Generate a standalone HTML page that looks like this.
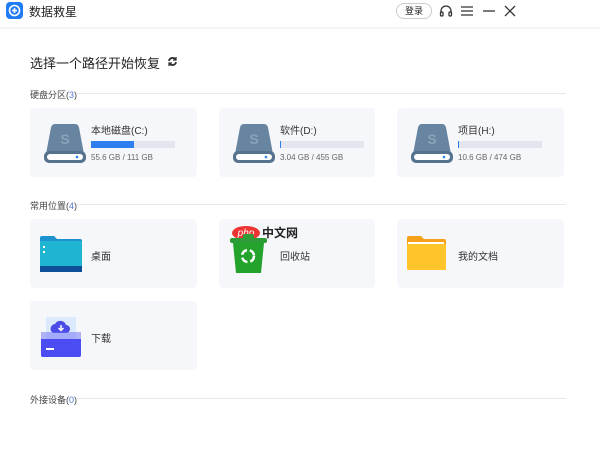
<!DOCTYPE html>
<html><head><meta charset="utf-8"><style>
*{margin:0;padding:0;box-sizing:border-box}
body{width:600px;height:454px;background:#fff;font-family:"Liberation Sans","Noto Sans CJK SC",sans-serif;position:relative;overflow:hidden;color:#333}
.a{position:absolute}
.hdr{left:0;top:0;width:600px;height:29px;border-bottom:2px solid #f3f4f6}
.card{position:absolute;background:#f6f7fa;border-radius:4px;width:167px;height:69px}
.sec{position:absolute;left:30px;font-size:9px;color:#444}
.sec b{font-weight:normal;color:#5577cc}
.line{position:absolute;height:1px;background:#e8e9ec}
.nm{position:absolute;font-size:10px;color:#333}
.bar{position:absolute;height:7px;width:84px;background:#e3e6ee}
.bar i{display:block;height:7px;background:#2d7ff0}
.sz{position:absolute;font-size:8px;color:#666}
</style></head><body>
<div class="a hdr"></div>
<svg class="a" style="left:6px;top:2px" width="17" height="17"><rect width="17" height="17" rx="4" fill="#1f7cf5"/><circle cx="8.5" cy="8.5" r="5" fill="none" stroke="#fff" stroke-width="1.6"/><path d="M8.5 6v5M6 8.5h5" stroke="#fff" stroke-width="1.6"/></svg>
<div class="a" style="left:29px;top:3px;font-size:12px;color:#222">数据救星</div>
<div class="a" style="left:396px;top:3px;width:36px;height:16px;border:1px solid #ccc;border-radius:8px;font-size:9px;text-align:center;line-height:14px;color:#222">登录</div>
<svg class="a" style="left:438px;top:3px" width="16" height="16" fill="none" stroke="#333" stroke-width="1.3"><path d="M3 10V8a5 5 0 0 1 10 0v2"/><rect x="2.5" y="9" width="2.5" height="4" rx="1"/><rect x="11" y="9" width="2.5" height="4" rx="1"/></svg>
<svg class="a" style="left:460px;top:4px" width="14" height="14" stroke="#333" stroke-width="1.3"><path d="M1 3h12M1 7h12M1 11h12"/></svg>
<svg class="a" style="left:482px;top:4px" width="14" height="14" stroke="#333" stroke-width="1.3"><path d="M1 7h12"/></svg>
<svg class="a" style="left:503px;top:4px" width="14" height="14" stroke="#333" stroke-width="1.3"><path d="M2 2l10 10M12 2L2 12"/></svg>

<div class="a" style="left:30px;top:53px;font-size:13px;color:#222">选择一个路径开始恢复</div>
<svg class="a" style="left:167px;top:56px" width="11" height="11" fill="none" stroke="#333" stroke-width="1.8"><path d="M2 5a3.6 3.6 0 0 1 6.5-1.5M9 6a3.6 3.6 0 0 1-6.5 1.5"/><path d="M9 1v3H6M2 10V7h3" stroke-width="1.3"/></svg>

<div class="sec" style="top:88px">硬盘分区(<b>3</b>)</div><div class="line" style="left:76px;top:93px;width:490px"></div>
<div class="sec" style="top:199px">常用位置(<b>4</b>)</div><div class="line" style="left:76px;top:204px;width:490px"></div>
<div class="sec" style="top:393px">外接设备(<b>0</b>)</div><div class="line" style="left:76px;top:398px;width:490px"></div>

<div class="card" style="left:30px;top:108px"></div>
<div class="card" style="left:219px;top:108px;width:156px"></div>
<div class="card" style="left:397px;top:108px"></div>
<svg width="0" height="0" style="position:absolute"><defs><g id="dr"><path d="M11 0h20a4 4 0 0 1 4 3.5L40 30H2L7 3.5A4 4 0 0 1 11 0z" fill="#6784a0"/><rect x="0" y="27" width="42" height="12" rx="5" fill="#56728e"/><rect x="3" y="30" width="36" height="6" rx="3" fill="#fff"/><circle cx="33" cy="33" r="1.3" fill="#2d7ff0"/><text x="21" y="20" font-size="14" font-weight="bold" fill="#8aa3ba" text-anchor="middle" font-family="Liberation Sans">S</text></g></defs></svg>
<svg class="a" style="left:44px;top:124px" width="42" height="40"><use href="#dr"/></svg>
<svg class="a" style="left:233px;top:124px" width="42" height="40"><use href="#dr"/></svg>
<svg class="a" style="left:411px;top:124px" width="42" height="40"><use href="#dr"/></svg>
<div class="nm" style="left:91px;top:122px">本地磁盘(C:)</div><div class="bar" style="left:91px;top:141px"><i style="width:43px"></i></div><div class="sz" style="left:91px;top:153px">55.6 GB / 111 GB</div>
<div class="nm" style="left:280px;top:122px">软件(D:)</div><div class="bar" style="left:280px;top:141px"><i style="width:1px"></i></div><div class="sz" style="left:280px;top:153px">3.04 GB / 455 GB</div>
<div class="nm" style="left:458px;top:122px">项目(H:)</div><div class="bar" style="left:458px;top:141px"><i style="width:1px"></i></div><div class="sz" style="left:458px;top:153px">10.6 GB / 474 GB</div>

<div class="card" style="left:30px;top:219px"></div>
<div class="card" style="left:219px;top:219px;width:156px"></div>
<div class="card" style="left:397px;top:219px"></div>
<div class="card" style="left:30px;top:301px"></div>
<svg class="a" style="left:40px;top:236px" width="42" height="36"><path d="M0 2a2 2 0 0 1 2-2h12l3 3h23a2 2 0 0 1 2 2v31H0z" fill="#1c93cf"/><rect x="0" y="5" width="42" height="26" fill="#1fb4d2"/><rect x="0" y="30" width="42" height="6" fill="#0d4f98"/><rect x="3" y="10" width="2" height="2" fill="#fff"/><rect x="3" y="15" width="2" height="2" fill="#fff"/></svg>
<div class="nm" style="left:91px;top:248px">桌面</div>
<svg class="a" style="left:225px;top:223px;" width="80" height="20"><ellipse cx="21" cy="10" rx="14" ry="7" fill="#e33"/><text x="21" y="13" font-size="10" fill="#fff" text-anchor="middle" font-style="italic">php</text><text x="37" y="14" font-size="12" font-weight="bold" fill="#222">中文网</text></svg>
<svg class="a" style="left:230px;top:234px" width="38" height="40"><rect x="0" y="4" width="37" height="5" rx="2" fill="#2e9c37"/><rect x="13" y="0" width="11" height="5" rx="2" fill="#2e9c37"/><path d="M3 9h31l-3 30H6z" fill="#24a32c"/><circle cx="18" cy="22" r="6" fill="none" stroke="#fff" stroke-width="2.5" stroke-dasharray="7 3"/></svg>
<div class="nm" style="left:280px;top:248px">回收站</div>
<svg class="a" style="left:407px;top:236px" width="42" height="36"><path d="M0 2a2 2 0 0 1 2-2h12l3 3h20a2 2 0 0 1 2 2v4H0z" fill="#f6a11a"/><rect x="1" y="6" width="36" height="3" fill="#fff"/><rect x="0" y="8" width="39" height="26" rx="1" fill="#ffc52b"/></svg>
<div class="nm" style="left:458px;top:248px">我的文档</div>
<svg class="a" style="left:41px;top:317px" width="40" height="40"><rect x="5" y="0" width="30" height="22" fill="#dbeafe"/><path d="M10 14a5 5 0 0 1 4-7 6 6 0 0 1 11 1 4 4 0 0 1 0 8H12z" fill="#4c4ce6"/><path d="M20 8v5M17.5 11l2.5 2.5 2.5-2.5" stroke="#fff" stroke-width="1.5" fill="none"/><path d="M0 15h40v23a2 2 0 0 1-2 2H2a2 2 0 0 1-2-2z" fill="#6a6ef5" opacity=".5"/><path d="M0 22h40v16a2 2 0 0 1-2 2H2a2 2 0 0 1-2-2z" fill="#4b4cf2"/><rect x="5" y="31" width="8" height="2" fill="#fff"/></svg>
<div class="nm" style="left:91px;top:330px">下载</div>
</body></html>
